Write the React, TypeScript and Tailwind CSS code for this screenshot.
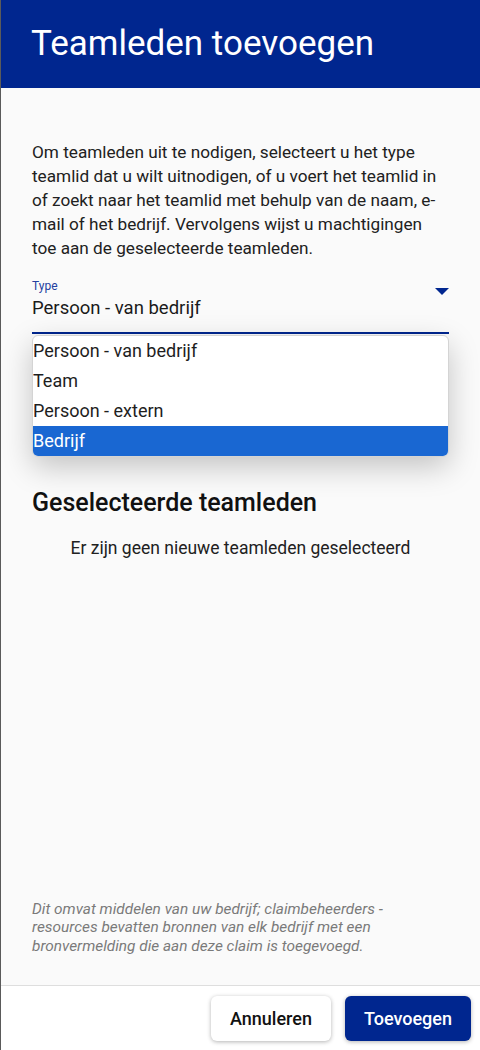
import React from "react";

export default function App() {
  const options = ["Persoon - van bedrijf", "Team", "Persoon - extern", "Bedrijf"];
  return (
    <div
      className="w-[480px] h-[1050px] flex flex-col bg-[#fafafa] border-l border-[#5a5a5a] overflow-hidden"
      style={{ fontFamily: "Roboto, 'Noto Sans', sans-serif" }}
    >
      <div className="h-[88px] shrink-0 bg-[#00268f] flex items-center pl-[30px]">
        <h1 className="text-[35px] leading-none text-white font-normal pb-[2px]">Teamleden toevoegen</h1>
      </div>
      <div className="flex-1 flex flex-col px-[31px] pt-[52px]">
        <p className="text-[17.2px] leading-[24px] text-[#212121] whitespace-nowrap">
          Om teamleden uit te nodigen, selecteert u het type
          <br />
          teamlid dat u wilt uitnodigen, of u voert het teamlid in
          <br />
          of zoekt naar het teamlid met behulp van de naam, e-
          <br />
          mail of het bedrijf. Vervolgens wijst u machtigingen
          <br />
          toe aan de geselecteerde teamleden.
        </p>
        <div className="relative mt-[18px]">
          <div className="border-b-2 border-[#00268f] pb-[12px] pr-[4px] flex items-end justify-between">
            <div className="flex flex-col">
              <span className="text-[12px] leading-[16px] text-[#2440a0]">Type</span>
              <span className="text-[18.5px] leading-[24px] text-[#1a1a1a] mt-[2px]">Persoon - van bedrijf</span>
            </div>
            <svg width="14" height="8" viewBox="0 0 14 8" className="mb-[24px] mr-[-4px]">
              <path d="M0 0 L14 0 L7 7 Z" fill="#00268f" />
            </svg>
          </div>
          <div className="absolute left-0 right-0 top-[calc(100%+1px)] bg-white rounded-[6px] overflow-hidden border border-[#d4d4d4] shadow-[0_10px_30px_rgba(0,0,0,0.22)] z-10">
            {options.map((o, i) => (
              <div
                key={o}
                className={
                  i === 3
                    ? "h-[30px] flex items-center bg-[#1967d2] text-white text-[18px] leading-none"
                    : "h-[30px] flex items-center text-[#1e1e1e] text-[18px] leading-none"
                }
              >
                {o}
              </div>
            ))}
          </div>
        </div>
        <div className="h-[154px] shrink-0" />
        <h2 className="text-[25px] leading-[30px] font-medium text-[#111]">Geselecteerde teamleden</h2>
        <p className="mt-[18px] text-center text-[17.5px] leading-[24px] text-[#212121]">
          Er zijn geen nieuwe teamleden geselecteerd
        </p>
        <div className="flex-1" />
        <p className="italic text-[15.4px] leading-[18.5px] text-[#7a7a7a] pb-[30px] pr-[30px]">
          Dit omvat middelen van uw bedrijf; claimbeheerders - resources bevatten bronnen van elk bedrijf met een
          bronvermelding die aan deze claim is toegevoegd.
        </p>
      </div>
      <div className="h-[65px] shrink-0 bg-white border-t border-[#dedede] flex items-start justify-end gap-[14px] pt-[10px] pr-[9px]">
        <button className="w-[120px] h-[45px] rounded-[6px] bg-white shadow-[0_1px_4px_rgba(0,0,0,0.3)] text-[18px] font-medium text-[#111]">
          Annuleren
        </button>
        <button className="w-[126px] h-[45px] rounded-[6px] bg-[#00268f] shadow-[0_1px_4px_rgba(0,0,0,0.3)] text-[18px] font-medium text-white">
          Toevoegen
        </button>
      </div>
    </div>
  );
}
